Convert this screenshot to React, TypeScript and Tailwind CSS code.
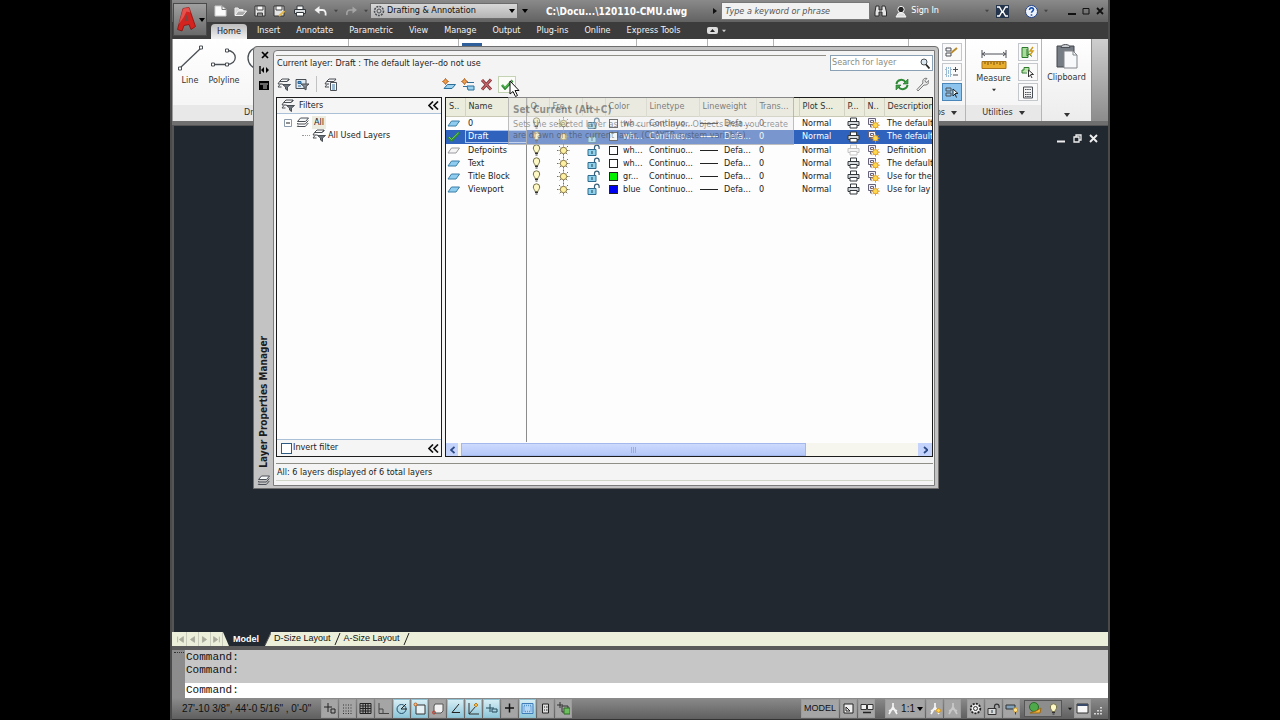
import { useState } from "react";
import type { ReactNode } from "react";

type IcoProps = {
	w?: number;
	h?: number;
	box?: string;
	className?: string;
	children: ReactNode;
};

function Ico({ w = 14, h = 14, box, className = "", children }: IcoProps) {
	return (
		<svg
			width={w}
			height={h}
			viewBox={box ?? `0 0 ${w} ${h}`}
			fill="none"
			stroke="#4a4f55"
			aria-hidden="true"
			className={`shrink-0 ${className}`}
		>
			{children}
		</svg>
	);
}

/* ---------- shared glyphs ---------- */

const Caret = ({ className = "text-black" }: { className?: string }) => (
	<Ico w={6} h={4} className={className}>
		<path d="M0 0h6L3 4z" fill="currentColor" stroke="none" />
	</Ico>
);

const Sheets = () => (
	<Ico w={13} h={11}>
		<path d="M4.500 1h8l-3 3.500h-8z" fill="#f6f8fa" />
		<path d="M2 6l-.7 1h8l3-3.500M2 8.500l-.7 1h8l3-3.500" />
	</Ico>
);

const SheetsFunnel = () => (
	<Ico w={14} h={13}>
		<path d="M5 1h7l-2 2.500H2.500zM3 6H1l1.500-2.500M5.500 6H3M4.500 9H1l2-2.500M10.500 3.500L12.500 1" />
		<path d="M5.500 6.500h8L10.500 9v3.500L8.500 11V9z" fill="#6b737b" />
	</Ico>
);

const PanelFunnel = () => (
	<Ico w={14} h={13}>
		<path d="M1 1.500h10v9H1z" fill="#dfe9f2" />
		<path d="M3 3.500h3v2H3zM3 8h3" stroke="#2b6596" fill="#58a0d0" />
		<path d="M6 6h8l-3 2.500V12L9 10.500v-2z" fill="#8a929a" />
	</Ico>
);

const SheetsList = () => (
	<Ico w={14} h={13}>
		<path d="M5 1h7l-2 2.500H2.500zM5 6H1l1.500-2.500M5 9H1l2-2.500" />
		<path d="M6.500 4.500h6v8h-6z" fill="#f8f8f8" />
		<path d="M8 7h3M8 9h3M8 11h3" stroke="#3778a8" />
	</Ico>
);

const Layer = ({ off }: { off?: boolean }) => (
	<Ico w={13} h={7}>
		<path d="M4.500 1h8l-3.500 5h-8z" fill={off ? "#f4f4f4" : "#8fcdf0"} stroke={off ? "#9a9aa0" : "#3c7ea6"} />
	</Ico>
);

const Check = ({ w = 13 }: { w?: number }) => (
	<Ico w={w} h={11} box="0 0 13 11">
		<path d="M1.500 6l3 3.500L12 1.500" stroke="#2f8a35" strokeWidth="2.600" />
		<path d="M2 6l2.500 2.500L11.500 1.800" stroke="#6fd25f" strokeWidth="1" />
	</Ico>
);

const Bulb = () => (
	<Ico w={9} h={12}>
		<path d="M3 8.500C3 7 1.300 6 1.300 4a3.200 3.200 0 016.400 0c0 2-1.700 3-1.700 4.500z" fill="#fdf8c4" stroke="#74714c" />
		<path d="M3 9.500h3M3.500 11h2" stroke="#333" />
	</Ico>
);

const Sun = () => (
	<Ico w={13} h={13}>
		<path d="M6.500 0v13M0 6.500h13M2 2l9 9M11 2l-9 9" stroke="#75705a" strokeDasharray="1.500 1" />
		<circle cx="6.500" cy="6.500" r="3.200" fill="#fdf0a0" stroke="#8a7a4a" />
	</Ico>
);

const Unlock = ({ gray }: { gray?: boolean }) => (
	<Ico w={13} h={12}>
		<path d="M7.500 6V3.500a2.300 2.300 0 014.600 0V5" stroke={gray ? "#333" : "#38607a"} strokeWidth="1.200" />
		<path d="M1 5.500h8v6H1z" fill={gray ? "#d8d8d8" : "#8fd2ee"} stroke={gray ? "#333" : "#2f6a8c"} />
		<path d="M5 7v3" stroke="#22404f" />
	</Ico>
);

const Printer = ({ off, w = 13 }: { off?: boolean; w?: number }) => (
	<Ico w={w} h={12} box="0 0 13 12">
		<g stroke={off ? "#c4c4c4" : "#33383d"}>
			<path d="M3.500 4.500V1h6v3.500" fill="#fff" />
			<path d="M1 4.500h11v4H1z" fill={off ? "#f4f4f4" : "#d7dadd"} />
			<path d="M3 7.500h7v3.500H3z" fill="#fff" />
		</g>
	</Ico>
);

const FreezeNew = () => (
	<Ico w={13} h={13}>
		<path d="M1.500 1.500h7v6h-7z" stroke="#66627a" fill="#f2f2f8" />
		<path d="M3.500 3.500h3v2h-3zM3.500 7.500v2.500H5" stroke="#66627a" />
		<path d="M8.500 3.800v8.800M4.200 8.200h8.600M5.500 5.200l6 6M11.500 5.200l-6 6" stroke="#e0962a" />
		<circle cx="8.500" cy="8.200" r="2.600" fill="#ffd84e" stroke="#d8941a" strokeWidth=".8" />
	</Ico>
);

const SunSpark = () => (
	<>
		<circle cx="3.500" cy="3.500" r="2" fill="#f0a04a" stroke="#b8682a" />
		<path d="M3.500 0v1M3.500 6v1M0 3.500h1M6 3.500h1" stroke="#c87a3a" />
	</>
);

const Chevrons = () => (
	<Ico w={11} h={9}>
		<path d="M5 .5l-4 4 4 4M10 .5l-4 4 4 4" stroke="#111" strokeWidth="1.700" />
	</Ico>
);

/* ---------- title bar ---------- */

const quickTools: { label: string; icon: ReactNode }[] = [
	{ label: "New", icon: <Ico w={13} h={12}><path d="M1 1h7l4 3.500V11H1z" fill="#fafafa" stroke="#ccc" /><path d="M8 1v3.500h4" stroke="#777" /></Ico> },
	{ label: "Open", icon: <Ico w={13} h={12}><path d="M1 10V3h3l1 1.500h4V6" fill="#d8d8d8" stroke="#eee" /><path d="M1 10.500L4 6h8.500l-3.500 4.500z" fill="#aaa" stroke="#f4f4f4" /></Ico> },
	{ label: "Save", icon: <Ico w={12} h={12}><path d="M1 1h10v10H1z" fill="#e4e4e4" stroke="#333" /><path d="M3 1h6v4H3z" fill="#fff" stroke="#444" /><path d="M3.500 11V8h5v3" fill="#888" stroke="#444" /></Ico> },
	{ label: "Save As", icon: <Ico w={13} h={12}><path d="M1 1h10v10H1z" fill="#e4e4e4" stroke="#333" /><path d="M3 1h6v4H3z" fill="#fff" stroke="#444" /><path d="M6 11l5.500-5" stroke="#e3b84a" strokeWidth="2" /></Ico> },
	{ label: "Plot", icon: <Printer w={14} /> },
	{ label: "Undo", icon: <Ico w={13} h={12}><path d="M2 5h6.500c3 0 3.500 3 3 5.500" stroke="#f2f2f2" strokeWidth="1.800" /><path d="M5.500 1v8L.5 5z" fill="#f2f2f2" stroke="none" /></Ico> },
];

function TitleBar() {
	return (
		<header className="flex h-[22px] items-center bg-linear-to-b from-[#8a8a8a] to-[#626262] pl-[42px] text-[9px] text-white">
			<div className="flex items-center gap-[7px]">
				{quickTools.map((t) => (
					<button key={t.label} type="button" aria-label={t.label} className="flex">
						{t.icon}
					</button>
				))}
				<Caret className="w-1 text-[#444]" />
				<button type="button" aria-label="Redo" className="flex">
					<Ico w={12} h={12}>
						<path d="M10 5H5C2 5 1.500 8 2 10" stroke="#a5a5a5" strokeWidth="1.600" />
						<path d="M7.500 1.500v7L12 5z" fill="#a5a5a5" stroke="none" />
					</Ico>
				</button>
				<Caret className="w-1 text-[#444]" />
			</div>
			<button
				type="button"
				className="ml-[2px] flex h-4 w-[148px] items-center gap-[2px] border border-[#6c6c6c] bg-linear-to-b from-[#d8d8d8] to-[#b4b4b4] px-[2px] text-[#111]"
			>
				<Ico w={12} h={12}>
					<circle cx="6" cy="6" r="4.500" strokeDasharray="2 1" strokeWidth="1.600" />
					<circle cx="6" cy="6" r="2" />
				</Ico>
				<span className="flex-1 text-left">Drafting &amp; Annotation</span>
				<Caret />
			</button>
			<span className="ml-1 flex">
				<Caret />
			</span>
			<h1 className="ml-[18px] text-[10px] font-bold whitespace-nowrap">C:\Docu...\120110-CMU.dwg</h1>
			<Ico w={4} h={6} className="mr-1 ml-auto">
				<path d="M0 0l4 3-4 3z" fill="#111" stroke="none" />
			</Ico>
			<input
				aria-label="Search help"
				placeholder="Type a keyword or phrase"
				className="h-[18px] w-[149px] border border-[#777] bg-[#f1f1f1] px-[3px] italic placeholder:text-[#555]"
			/>
			<button type="button" aria-label="Search" className="ml-1 flex">
				<Ico w={13} h={12}>
					<path d="M2 1h3v4h3V1h3l1.500 6v4H8V7H5v4H1V7z" fill="#e4e4e4" stroke="#2c2c2c" />
				</Ico>
			</button>
			<button type="button" className="ml-2 flex items-center gap-1">
				<Ico w={12} h={13}>
					<circle cx="6" cy="4.500" r="3.200" fill="#222" stroke="#f4f4f4" />
					<path d="M1 12h10L8.500 8h-5z" fill="#ddd" stroke="#f4f4f4" />
				</Ico>
				Sign In
			</button>
			<span className="ml-[46px] flex">
				<Caret className="w-1 text-[#444]" />
			</span>
			<button type="button" aria-label="Exchange" className="ml-[7px] flex">
				<Ico w={13} h={13}>
					<path d="M0 0h13v13H0z" fill="#24344c" stroke="none" />
					<path d="M1 2h2.500L6 6.500 3.500 11H1M12 2H9.500L7 6.500 9.500 11H12" stroke="#fff" strokeWidth="1.400" />
				</Ico>
			</button>
			<button type="button" aria-label="Help" className="ml-4 flex">
				<Ico w={13} h={13}>
					<circle cx="6.500" cy="6.500" r="6" fill="#eef3fb" stroke="#23438a" />
					<path d="M4.500 5c0-3 4-2.500 4-.4 0 1.400-2 1.500-2 3.200M6.500 9.200v1.500" stroke="#1c4fa8" strokeWidth="1.600" />
				</Ico>
			</button>
			<span className="ml-1.5 flex">
				<Caret className="w-1 text-[#444]" />
			</span>
			<div className="mr-1 ml-5 flex items-center gap-[6px]">
				<button type="button" aria-label="Minimize" className="flex">
					<Ico w={8} h={8}><path d="M0 7h8" stroke="#111" strokeWidth="2" /></Ico>
				</button>
				<button type="button" aria-label="Maximize" className="flex">
					<Ico w={8} h={8}><path d="M1 1.500h6v5.500H1z" stroke="#111" /></Ico>
				</button>
				<button type="button" aria-label="Close" className="flex">
					<Ico w={8} h={8}><path d="M1 1l6 6M7 1L1 7" stroke="#111" strokeWidth="1.800" /></Ico>
				</button>
			</div>
		</header>
	);
}

function AppMenuButton() {
	return (
		<button
			type="button"
			aria-label="Application menu"
			className="absolute top-[3px] left-px flex h-[33px] w-[34px] items-center border border-[#4a4a4a] bg-linear-to-b from-[#a0a0a0] to-[#6a6a6a]"
		>
			<Ico w={23} h={28} className="ml-[2px]">
				<path d="M7 2.500l6-1 6.500 19-4.500 3-2-5-5 1-2 5.500-4.500-1.500z" fill="#d5231f" stroke="#8b100d" strokeWidth=".8" />
				<path d="M10.500 8.500l2 6-4 1z" fill="#7b4543" stroke="none" />
				<path d="M7 2.500l6-1 1.500 5-4-1-3 6-5 7z" fill="#f2706a" stroke="none" opacity=".6" />
			</Ico>
			<Caret />
		</button>
	);
}

/* ---------- ribbon ---------- */

const ribbonTabs = [
	"Home",
	"Insert",
	"Annotate",
	"Parametric",
	"View",
	"Manage",
	"Output",
	"Plug-ins",
	"Online",
	"Express Tools",
];

function RibbonTabs() {
	const [active, setActive] = useState("Home");
	return (
		<nav className="flex h-[17px] items-stretch bg-[#3c3c3c] pl-[39px] text-[9px] text-[#f2f2f2]">
			{ribbonTabs.map((t) => (
				<button
					key={t}
					type="button"
					onClick={() => setActive(t)}
					className={`mr-1 px-[6px] ${t === active ? "mt-[2px] rounded-t-sm bg-linear-to-b from-[#bdbdbd] to-[#f2f2f2] text-[#222]" : ""}`}
				>
					{t}
				</button>
			))}
			<button type="button" aria-label="Minimize ribbon" className="ml-4 flex items-center gap-1">
				<Ico w={11} h={7}>
					<rect x="0" y="0" width="11" height="7" rx="2" fill="#ddd" stroke="none" />
					<path d="M3 5l2.500-3L8 5z" fill="#222" stroke="none" />
				</Ico>
				<Caret className="w-1 text-[#ccc]" />
			</button>
		</nav>
	);
}

function RibbonPanel({ title, width, align = "justify-center", children }: { title?: string; width: string; align?: string; children?: ReactNode }) {
	return (
		<section className={`flex flex-col border-r border-[#b5b5b5] bg-linear-to-b from-white to-[#f3f3f4] ${width}`}>
			<div className="flex flex-1 items-start px-[3px] pt-1">{children}</div>
			<div className={`flex h-4 items-center gap-1.5 bg-[#e8e8e9] px-2 text-[#333] ${align}`}>
				{title}
				{title && <Caret className="text-[#333]" />}
			</div>
		</section>
	);
}

const ToolBtn = ({ label, on, children }: { label: string; on?: boolean; children: ReactNode }) => (
	<button
		type="button"
		aria-label={label}
		className={`flex h-[18px] w-5 items-center justify-center border ${on ? "border-[#4a86b8] bg-[#8cc4ee]" : "border-[#c4c8cc] bg-[#fafafa]"}`}
	>
		{children}
	</button>
);

function Ribbon() {
	return (
		<div className="flex h-[82px] items-stretch bg-[#9b9b9d] pl-px text-[9px]">
			<RibbonPanel title="Draw" width="w-[176px]">
				<button type="button" className="flex w-7 flex-col items-center gap-[2px] text-[#333]">
					<Ico w={26} h={29}>
						<path d="M3 25L24 5" strokeWidth="1.300" />
						<path d="M1.500 24h3v3h-3zM22.500 3h3v3h-3z" fill="#fff" />
					</Ico>
					Line
				</button>
				<button type="button" className="ml-0.5 flex w-9 flex-col items-center gap-[2px] text-[#333]">
					<Ico w={26} h={29}>
						<path d="M2 21.500h14c11 0 11-14 0-14" strokeWidth="1.300" />
						<path d="M.5 20h3v3h-3zM14.500 20h3v3h-3zM14.500 6h3v3h-3z" fill="#fff" />
					</Ico>
					Polyline
				</button>
				<Ico w={26} h={29} className="ml-1">
					<circle cx="13" cy="15" r="11" strokeWidth="1.300" />
				</Ico>
			</RibbonPanel>
			<RibbonPanel width="w-[110px]" />
			<RibbonPanel width="w-[178px]">
				<span className="h-5 w-5 bg-[#2f5f9a]" />
			</RibbonPanel>
			<RibbonPanel width="w-[71px]" />
			<RibbonPanel width="w-[66px]" />
			<RibbonPanel width="flex-1" />
			<RibbonPanel title="Groups" width="w-[57px]" align="justify-end">
				<div className="ml-auto flex flex-col gap-[2px]">
					<ToolBtn label="Group edit">
						<Ico w={14} h={12}><path d="M1 2h5v3H1zM1 7h5v3H1z" /><path d="M6 7l6-5" stroke="#b98a2c" strokeWidth="2" /></Ico>
					</ToolBtn>
					<ToolBtn label="Ungroup">
						<Ico w={14} h={12}><path d="M1 2h5v3H1zM1 7h5v3H1z" stroke="#3d7fae" strokeDasharray="1 1" /><path d="M8 3.500h5M10.500 1v5M8 9h5" /></Ico>
					</ToolBtn>
					<ToolBtn label="Group selection" on>
						<Ico w={14} h={12}><path d="M1 2h5v3H1zM1 7h5v3H1z" /><path d="M8 3v7l2-2 1.500 3.500M8 3l5 4.500h-3" fill="#fff" stroke="#222" /></Ico>
					</ToolBtn>
				</div>
			</RibbonPanel>
			<RibbonPanel title="Utilities" width="w-[76px]">
				<button type="button" className="flex flex-1 flex-col items-center text-[#333]">
					<Ico w={26} h={30} className="mt-[3px]">
						<path d="M1 4v8M25 4v8M1 8h24M4 6L1.500 8 4 10M22 6l2.500 2-2.500 2" />
						<path d="M1 15.500h24v7H1z" fill="#e8ad2c" stroke="#a8741a" />
						<path d="M4 16v2M7 16v3M10 16v2M13 16v3M16 16v2M19 16v3M22 16v2" stroke="#7b5312" />
					</Ico>
					<span className="-mt-1">Measure</span>
					<Caret className="mt-0.5 w-1 text-[#333]" />
				</button>
				<div className="flex flex-col gap-[2px]">
					<ToolBtn label="Quick select">
						<Ico w={14} h={13}><path d="M1 1.500h6v10H1zM6 3v7l2-2 3 2.500" fill="#a9dc9a" stroke="#2d7a2c" /><path d="M12 1L9 5h3L9 9" stroke="#d09a1a" strokeWidth="1.400" /></Ico>
					</ToolBtn>
					<ToolBtn label="Select all">
						<Ico w={14} h={13}><path d="M1 7V4h2V1.500h5V5M1 7h5" fill="#b6e3a6" stroke="#2d7a2c" /><path d="M7.500 4v7l2-2 1.500 3M7.500 4l5 4.500h-3" fill="#fff" stroke="#333" /></Ico>
					</ToolBtn>
					<ToolBtn label="Quick calculator">
						<Ico w={12} h={13}><path d="M1.500 1h9v11h-9z" fill="#f4f4f4" /><path d="M3 3.500h6M3 6.500h6M3 8.500h6M3 10.500h6" strokeDasharray="1.500 .7" /></Ico>
					</ToolBtn>
				</div>
			</RibbonPanel>
			<section className="flex w-[50px] flex-col items-center border-r border-[#8d8d8d] bg-linear-to-b from-white to-[#ececed] pt-1 text-[#333]">
				<Ico w={24} h={28}>
					<path d="M2 3h17v21H2z" fill="#777d84" stroke="#42474d" />
					<path d="M6 4.500c0-4 9-4 9 0z" fill="#c9cdd1" />
					<path d="M9 8h9l4 4v13H9z" fill="#f8f9fa" stroke="#81868b" />
					<path d="M18 8v4h4" stroke="#81868b" />
				</Ico>
				Clipboard
				<Caret className="mt-auto mb-1" />
			</section>
			<div className="w-4 bg-linear-to-b from-[#cfcfcf] to-[#8c8c8c]" />
		</div>
	);
}

/* ---------- layer properties manager ---------- */

type LayerRow = {
	name: string;
	color: string;
	swatch: string;
	description: string;
	current?: boolean;
	noPlot?: boolean;
};

const layers: LayerRow[] = [
	{ name: "0", color: "wh...", swatch: "bg-white", description: "The default" },
	{ name: "Draft", color: "wh...", swatch: "bg-white", description: "The default", current: true },
	{ name: "Defpoints", color: "wh...", swatch: "bg-white", description: "Definition", noPlot: true },
	{ name: "Text", color: "wh...", swatch: "bg-white", description: "The default" },
	{ name: "Title Block", color: "gr...", swatch: "bg-[#00f000]", description: "Use for the" },
	{ name: "Viewport", color: "blue", swatch: "bg-[#0000f0]", description: "Use for lay" },
];

const columns: { label: string; width: string }[] = [
	{ label: "S..", width: "w-[19px]" },
	{ label: "Name", width: "w-[62px]" },
	{ label: "O.", width: "w-[22px]" },
	{ label: "Fre...", width: "w-[33px]" },
	{ label: "L..", width: "w-[23px]" },
	{ label: "Color", width: "w-[41px]" },
	{ label: "Linetype", width: "w-[53px]" },
	{ label: "Lineweight", width: "w-[57px]" },
	{ label: "Trans...", width: "w-[43px]" },
	{ label: "Plot S...", width: "w-[45px]" },
	{ label: "P...", width: "w-5" },
	{ label: "N..", width: "w-5" },
	{ label: "Description", width: "w-auto" },
];

function LayerTable() {
	return (
		<table className="w-full table-fixed border-collapse text-left leading-[13px] whitespace-nowrap">
			<colgroup>
				{columns.map((c) => (
					<col key={c.label} className={c.width} />
				))}
			</colgroup>
			<thead className="bg-[#ebecdc]">
				<tr className="h-[18px] border-b border-[#c8c8b4]">
					{columns.map((c) => (
						<th key={c.label} scope="col" className="overflow-hidden border-r border-[#d2d3c2] p-0 pl-[3px] font-normal text-[#333] last:border-r-0">
							{c.label}
						</th>
					))}
				</tr>
			</thead>
			<tbody>
				{layers.map((l) => (
					<tr key={l.name} className={l.current ? "h-[14px] bg-[#2f62bd] text-white" : "h-[13px]"}>
						<td className="p-0 pl-px">{l.current ? <Check /> : <Layer off={l.noPlot} />}</td>
						<td className="p-0">
							<span className={`block border pl-[2px] leading-[11px] ${l.current ? "border-[#a9c3ee]" : "border-transparent"}`}>{l.name}</span>
						</td>
						<td className="p-0 pl-[5px]"><Bulb /></td>
						<td className="p-0 pl-2"><Sun /></td>
						<td className="p-0 pl-[5px]"><Unlock /></td>
						<td className="p-0 pl-1">
							<span className="flex items-center gap-[5px]">
								<span className={`size-[9px] border border-[#222] ${l.swatch}`} />
								{l.color}
							</span>
						</td>
						<td className="p-0 pl-[3px]">Continuo...</td>
						<td className="p-0 pl-px">
							<span className="flex items-center gap-[6px]">
								<span className={`h-px w-[18px] ${l.current ? "bg-white" : "bg-[#222]"}`} />
								Defa...
							</span>
						</td>
						<td className="p-0 pl-[3px]">0</td>
						<td className="p-0 pl-[3px]">Normal</td>
						<td className="p-0 pl-[3px]"><Printer off={l.noPlot} /></td>
						<td className="p-0 pl-[3px]"><FreezeNew /></td>
						<td className="overflow-hidden p-0 pl-[3px]">{l.description}</td>
					</tr>
				))}
			</tbody>
		</table>
	);
}

function FilterPane() {
	const [invert, setInvert] = useState(false);
	return (
		<aside className="flex w-[166px] flex-col border border-[#1c1c1c] bg-[#fdfdfd]">
			<div className="flex h-4 items-center gap-1 border-b border-[#a9c0d6] bg-[#f5f5f5] pr-[2px] pl-1">
				<SheetsFunnel />
				<span className="flex-1">Filters</span>
				<button type="button" aria-label="Collapse filters"><Chevrons /></button>
			</div>
			<ul className="flex-1 pt-[2px] pl-[7px]">
				<li>
					<div className="flex h-[13px] items-center gap-1">
						<Ico w={8} h={8}>
							<path d="M.5.5h7v7h-7z" fill="#fff" stroke="#8a9aaa" />
							<path d="M2 4h4" stroke="#222" />
						</Ico>
						<Sheets />
						<span className="-ml-px bg-[#ecede0] px-[2px]">All</span>
					</div>
					<ul>
						<li className="flex h-[13px] items-center gap-[2px] pl-[18px]">
							<span className="h-px w-2 border-t border-dotted border-[#999]" />
							<SheetsFunnel />
							All Used Layers
						</li>
					</ul>
				</li>
			</ul>
			<div className="flex h-[17px] items-center border-t border-[#a9c0d6] bg-[#f5f5f5] pr-[2px] pl-1">
				<label className="flex flex-1 items-center gap-px">
					<input
						type="checkbox"
						checked={invert}
						onChange={() => setInvert(!invert)}
						className="size-[11px] appearance-none border border-[#2c5a80] bg-white checked:bg-[#2c5a80]"
					/>
					Invert filter
				</label>
				<button type="button" aria-label="Collapse"><Chevrons /></button>
			</div>
		</aside>
	);
}

function LayerManager() {
	return (
		<div
			role="dialog"
			aria-label="Layer Properties Manager"
			className="absolute top-[46px] left-[81px] flex w-[686px] rounded-t-sm border border-[#6e6e6e] bg-[#c3c3c3] text-[9px] text-[#1c1c1c]"
		>
			<div className="flex w-[19px] flex-col items-center gap-[7px] pt-1 pb-[2px]">
				<button type="button" aria-label="Close palette">
					<Ico w={8} h={8} className="ml-[2px]"><path d="M1 1l6 6M7 1L1 7" stroke="#000" strokeWidth="1.700" /></Ico>
				</button>
				<button type="button" aria-label="Auto-hide">
					<Ico w={10} h={8}><path d="M1 0v8" stroke="#000" strokeWidth="1.400" /><path d="M2 4l3-3v6zM10 4L7 1v6z" fill="#000" stroke="none" /></Ico>
				</button>
				<button type="button" aria-label="Properties">
					<Ico w={10} h={9}><path d="M0 0h10v9H0z" fill="#000" stroke="none" /><path d="M1 3h8M4 5h4M4 7h4" stroke="#ccc" /></Ico>
				</button>
				<h2 className="mt-auto rotate-180 text-[10px] font-bold whitespace-nowrap [writing-mode:vertical-rl]">
					Layer Properties Manager
				</h2>
				<Sheets />
			</div>
			<div className="mt-[3px] mr-[3px] mb-[2px] flex flex-1 flex-col rounded-tl-sm border border-[#7b7b7b] bg-[#f3f4f3] pr-px pl-[2px]">
				<div className="flex items-start gap-1 pt-1">
					<div className="flex h-4 flex-1 items-center border-t border-[#8f8f88] pl-px leading-[13px]">
						Current layer: Draft : The default layer--do not use
					</div>
					<label className="flex h-4 w-[103px] items-center border border-[#8aa0b4] bg-white pr-[2px] pl-px">
						<input aria-label="Search for layer" placeholder="Search for layer" className="min-w-0 flex-1 placeholder:text-[#8c8c80]" />
						<Ico w={10} h={11}>
							<circle cx="4" cy="4" r="3" fill="#dce8f0" />
							<path d="M6 6.500l3.500 4" stroke="#222" strokeWidth="1.800" />
						</Ico>
					</label>
				</div>
				<div className="flex h-[26px] items-center">
					<div className="flex w-[172px] items-center gap-1 pl-px">
						<button type="button" aria-label="New property filter"><SheetsFunnel /></button>
						<button type="button" aria-label="New group filter"><PanelFunnel /></button>
						<span className="mx-[3px] h-4 w-px bg-[#c2c2c2]" />
						<button type="button" aria-label="Layer states manager"><SheetsList /></button>
					</div>
					<div className="-ml-[6px] flex flex-1 items-center gap-[5px]">
						<button type="button" aria-label="New layer">
							<Ico w={14} h={13}><path d="M5.500 6.500h8l-3.500 4H2z" fill="#9ad2f0" stroke="#2c6e96" /><SunSpark /></Ico>
						</button>
						<button type="button" aria-label="New layer VP frozen">
							<Ico w={14} h={13}><path d="M6 4.500h7M6 8h7v4H7zM2 8.500h4" fill="#9ad2f0" stroke="#2c6e96" /><SunSpark /></Ico>
						</button>
						<button type="button" aria-label="Delete layer">
							<Ico w={13} h={13}><path d="M2 2l9 9.500M11 1.500L2 11.500" stroke="#7a3438" strokeWidth="3" /><path d="M2 2l9 9.500M11 1.500L2 11.500" stroke="#c8646a" strokeWidth="1.300" /></Ico>
						</button>
						<button type="button" aria-label="Set current" className="flex h-[17px] w-[18px] items-center justify-center border border-[#c3d3b4] bg-[#fbfcf8]">
							<Check w={14} />
						</button>
					</div>
					<div className="flex items-center gap-[6px] pr-[4px]">
						<button type="button" aria-label="Refresh">
							<Ico w={14} h={13}>
								<path d="M1.500 6C2 1.500 8 .5 10.500 4M12.500 7c-.5 4.500-6.500 5.500-9 2" stroke="#2f8a35" strokeWidth="2" />
								<path d="M13 1v5H8zM1 12V7h5z" fill="#3fa045" stroke="#1f6d27" strokeWidth=".6" />
							</Ico>
						</button>
						<button type="button" aria-label="Settings">
							<Ico w={14} h={14}>
								<path d="M2 12.500l6-6.500C7 3 9 .5 12 1.500L10 3.500l.5 1.500 1.500.5 1.500-2c1 3-1.500 5-4.500 4.500l-6 6z" fill="#ececec" stroke="#777" />
							</Ico>
						</button>
					</div>
				</div>
				<div className="flex h-[360px] gap-[3px]">
					<FilterPane />
					<div className="relative flex min-w-0 flex-1 flex-col overflow-hidden border border-[#1c1c1c] bg-[#fdfdfd]">
						<LayerTable />
						<span className="absolute top-0 bottom-[14px] left-[80px] w-px bg-[#8c8c8c]" />
						<div className="mt-auto flex h-[13px] items-stretch bg-[#f6f6ee]">
							<button type="button" aria-label="Scroll left" className="flex w-3 items-center justify-center bg-[#c3d3fb]">
								<Ico w={5} h={8}><path d="M4.500 1L1 4l3.500 3" stroke="#2c4a86" strokeWidth="1.800" /></Ico>
							</button>
							<span className="ml-[3px] flex w-[345px] items-center justify-center gap-px border border-[#a4b8ee] bg-linear-to-b from-[#cddafe] to-[#b5c8f8]">
								<i className="h-1.5 w-px bg-[#98aee6]" />
								<i className="h-1.5 w-px bg-[#98aee6]" />
								<i className="h-1.5 w-px bg-[#98aee6]" />
							</span>
							<button type="button" aria-label="Scroll right" className="ml-auto flex w-[14px] items-center justify-center bg-[#c3d3fb]">
								<Ico w={5} h={8}><path d="M1 1l3.500 3L1 7" stroke="#2c4a86" strokeWidth="1.800" /></Ico>
							</button>
						</div>
					</div>
				</div>
				<p className="mt-[6px] h-[17px] border-t border-[#8f8f88] pl-px leading-4">All: 6 layers displayed of 6 total layers</p>
				<div className="mb-1 border-t border-[#cfd6c8]" />
			</div>
			{/* fading tooltip of the Set Current button */}
			<div
				role="tooltip"
				className="absolute top-[50px] left-[254px] w-[286px] border border-[#999]/60 bg-[#e9e9e9]/40 px-[4px] pt-[5px] pb-[3px] whitespace-nowrap text-[#333]/50"
			>
				<b className="block text-[10px] leading-[14px]">Set Current (Alt+C)</b>
				<span className="block pt-0.5 leading-[11px]">Sets the selected layer as the current layer. Objects that you create</span>
				<span className="block leading-[11px]">are drawn on the current layer. (CLAYER system variable)</span>
			</div>
			<Ico w={12} h={18} className="absolute top-[33px] left-[255px]">
				<path d="M1 1v13l3-2.500 2.500 5 2-1-2.500-5h4z" fill="#fff" stroke="#111" />
			</Ico>
		</div>
	);
}

/* ---------- drawing area and bottom bars ---------- */

function DrawingArea() {
	return (
		<main className="flex min-h-[300px] flex-1 items-start justify-end border-t border-l-2 border-[#555] bg-[#212830] pt-2 pr-[10px]">
			<div className="flex gap-[7px]">
				<button type="button" aria-label="Minimize drawing">
					<Ico w={9} h={9}><path d="M0 7.500h8" stroke="#eee" strokeWidth="2" /></Ico>
				</button>
				<button type="button" aria-label="Restore drawing">
					<Ico w={9} h={9}><path d="M3 2.500V1h5v5H6.500M1 3h5v5H1z" stroke="#eee" strokeWidth="1.300" /></Ico>
				</button>
				<button type="button" aria-label="Close drawing">
					<Ico w={9} h={9}><path d="M1 1l7 7M8 1L1 8" stroke="#eee" strokeWidth="1.900" /></Ico>
				</button>
			</div>
		</main>
	);
}

const Slash = () => (
	<Ico w={7} h={14}>
		<path d="M1 13L6 1" stroke="#222" />
	</Ico>
);

const navArrows = [
	{ label: "First layout", d: "M2 2v7M9 2L4 5.500 9 9z" },
	{ label: "Previous layout", d: "M8 2L3 5.500 8 9z" },
	{ label: "Next layout", d: "M3 2l5 3.500L3 9z" },
	{ label: "Last layout", d: "M9 2v7M2 2l5 3.500L2 9z" },
];

function LayoutTabs() {
	return (
		<nav className="flex h-[14px] items-center bg-[#ecf0da] pl-[3px] font-['Liberation_Sans',Arial,sans-serif] text-[9px] text-[#111]">
			{navArrows.map((a) => (
				<button key={a.label} type="button" aria-label={a.label} className="flex h-full w-3 items-center justify-center border-r border-[#c9ccba]">
					<Ico w={9} h={9} box="0 0 11 11"><path d={a.d} fill="#a9aa9c" stroke="#a9aa9c" /></Ico>
				</button>
			))}
			<Ico w={6} h={14}><path d="M0 0h6v14z" fill="#212830" stroke="none" /></Ico>
			<button type="button" className="h-full bg-[#212830] px-1 leading-[14px] font-bold text-white">Model</button>
			<Ico w={8} h={14}><path d="M0 0h8L2 14H0z" fill="#212830" stroke="none" /><path d="M2 13L8 1" stroke="#555" /></Ico>
			<button type="button" className="px-[3px]">D-Size Layout</button>
			<Slash />
			<button type="button" className="px-[3px]">A-Size Layout</button>
			<Slash />
		</nav>
	);
}

function CommandLine() {
	return (
		<section className="flex border-t-4 border-[#5a5a5a] bg-[#8c8c8c] font-['Liberation_Mono','Courier_New',monospace] text-[11px] text-[#111]">
			<div className="w-[13px] pt-[2px] pl-[2px]">
				<div className="h-[2px] w-[10px] border-t border-dotted border-[#333]" />
			</div>
			<div className="flex-1">
				<div className="h-[33px] bg-[#c6c6c6] pt-px pl-px leading-[13px]">
					<p>Command:</p>
					<p>Command:</p>
				</div>
				<label className="flex h-[15px] items-center bg-white pl-px">
					Command:
					<input aria-label="Command" className="ml-1 min-w-0 flex-1" />
				</label>
			</div>
		</section>
	);
}

const drafting: { label: string; on?: boolean; icon: ReactNode }[] = [
	{ label: "Infer constraints", icon: <path d="M5 1v9M1 5h8M8 7h4v4H8z" stroke="#222" /> },
	{ label: "Snap", icon: <path d="M2 3h9M2 6h9M2 9h9M2 11.500h9" stroke="#333" strokeDasharray="1 1.500" /> },
	{ label: "Grid", icon: <path d="M1 1.500h11v10H1zM1 4h11M1 6.500h11M1 9h11M4 1v10M6.500 1v10M9 1v10" stroke="#222" /> },
	{ label: "Ortho", icon: <path d="M2 1v10.500h10M2 7h4v4" stroke="#444" /> },
	{ label: "Polar", on: true, icon: <><circle cx="6.500" cy="7" r="4.500" stroke="#24506a" /><path d="M6 7h6M6 7l5-5" stroke="#222" /></> },
	{ label: "Object snap", on: true, icon: <><path d="M3 3h9v9H3z" fill="#e6f1f6" stroke="#333" /><circle cx="2.500" cy="2.500" r="1.500" fill="#f8c08a" stroke="#b5652a" /></> },
	{ label: "3D object snap", icon: <><path d="M4 2h8v7l-2 2H3V4z" fill="#f2f2f2" stroke="#555" /><circle cx="3" cy="10.500" r="1.500" stroke="#c03a2a" /></> },
	{ label: "Object snap tracking", on: true, icon: <path d="M10 2L3 10.500h8" stroke="#222" /> },
	{ label: "Dynamic UCS", on: true, icon: <><path d="M2 1v11h10M2 12L9 4" stroke="#333" /><path d="M9 1l2 2-2 2-2-2z" fill="#f3b84a" stroke="#b5802a" /></> },
	{ label: "Dynamic input", on: true, icon: <path d="M5 2v8M1 6h8M7 7h5v3H7z" stroke="#244a5a" /> },
	{ label: "Lineweight", icon: <path d="M6.500 1.500v9M2 6h9" stroke="#111" strokeWidth="1.500" /> },
	{ label: "Transparency", on: true, icon: <><path d="M1 1.500h11v10H1z" fill="#b4d7f5" stroke="#3f7db8" /><path d="M3 3.500h7v6H3z" stroke="#5a98d0" strokeWidth="1.500" strokeDasharray="1 1" /></> },
	{ label: "Quick properties", icon: <path d="M3.500 2h6v9h-6zM5 5h1M7 5h1.500M5 8h1M7 8h1.500" fill="#ddd" stroke="#222" /> },
	{ label: "Selection cycling", icon: <><path d="M3 0v6M0 3h6M5 4h6v6H5z" stroke="#333" /><path d="M7 6h6v6H7z" fill="#6cbf5c" stroke="#2d6a26" /></> },
];

const StatusBtn = ({ label, on, children }: { label: string; on?: boolean; children: ReactNode }) => (
	<button
		type="button"
		aria-label={label}
		className={`flex h-[19px] w-[17px] items-center justify-center border ${on ? "border-[#8ec0d2] bg-linear-to-b from-[#d6edf4] to-[#8fc7da]" : "border-[#9c9c9c] bg-[#a5a5a5]"}`}
	>
		{children}
	</button>
);

const AnnoScale = ({ color, spark }: { color: string; spark?: boolean }) => (
	<Ico w={12} h={13}>
		<path d="M6 1v4M6 5L2 12M6 5l4 7M2 9l4-2 4 2" stroke={color} strokeWidth="1.700" />
		{spark && <circle cx="9.500" cy="8.500" r="2" fill="#ffd24a" stroke="#d0962a" />}
	</Ico>
);

function StatusBar() {
	return (
		<footer className="flex h-[22px] items-center border-b border-[#333] bg-linear-to-b from-[#8b8b8b] to-[#5f5f5f] pr-1 font-['Liberation_Sans',Arial,sans-serif] text-[9px] text-[#111]">
			<span className="w-[149px] pl-[10px] text-[10px] whitespace-nowrap">27'-10 3/8", 44'-0 5/16" , 0'-0"</span>
			<div className="flex gap-px">
				{drafting.map((d) => (
					<StatusBtn key={d.label} label={d.label} on={d.on}>
						<Ico w={13} h={13}>{d.icon}</Ico>
					</StatusBtn>
				))}
			</div>
			<div className="ml-auto flex items-center gap-px">
				<button type="button" className="h-[19px] border border-[#9c9c9c] bg-[#a5a5a5] px-[2px]">MODEL</button>
				<StatusBtn label="Layout">
					<Ico w={12} h={12}><path d="M1 1h9v9H1z" fill="#f0f0f0" stroke="#222" /><path d="M3 4v4h4z" stroke="#222" /></Ico>
				</StatusBtn>
				<StatusBtn label="Quick view">
					<Ico w={14} h={12}><path d="M1 1.500h5.500v5H1zM7.500 1.500H13v5H7.500z" fill="#f0f0f0" stroke="#333" /><path d="M3 9.500h8" stroke="#222" strokeWidth="1.500" /></Ico>
				</StatusBtn>
			</div>
			<div className="ml-[10px] flex items-center gap-px">
				<button type="button" className="flex h-[19px] items-center gap-[2px] border border-[#9c9c9c] bg-[#a5a5a5] px-px text-[10px]">
					<AnnoScale color="#f4f4f4" />
					1:1
					<Caret />
				</button>
				<StatusBtn label="Annotation visibility"><AnnoScale color="#f4f4f4" spark /></StatusBtn>
				<StatusBtn label="Auto scale"><AnnoScale color="#c9c9c9" /></StatusBtn>
			</div>
			<div className="ml-[6px] flex items-center gap-px">
				<StatusBtn label="Workspace">
					<Ico w={13} h={13}>
						<circle cx="6.500" cy="6.500" r="4.800" fill="#eee" stroke="#222" strokeWidth="1.800" strokeDasharray="2 1.200" />
						<circle cx="6.500" cy="6.500" r="2" stroke="#333" />
					</Ico>
				</StatusBtn>
				<StatusBtn label="Lock toolbars"><Unlock gray /></StatusBtn>
				<StatusBtn label="Hardware">
					<Ico w={14} h={12}><path d="M1 2h9v4H1z" fill="#7f9fba" stroke="#333" /><circle cx="10.500" cy="7" r="2.200" fill="#ffe08a" stroke="#c8962a" /><path d="M10.500 9v2.500" stroke="#444" /></Ico>
				</StatusBtn>
			</div>
			<div className="mx-1 flex h-[17px] w-[38px] items-center justify-around border border-[#555] bg-[#8d8d8d]">
				<Ico w={15} h={13}><circle cx="6" cy="5" r="4.500" fill="#4fa84a" stroke="#2a6a2a" /><path d="M2 11l6-2 5-3-1 5z" fill="#f0b53a" stroke="#9a6a1a" /></Ico>
				<Bulb />
			</div>
			<span className="flex w-2 justify-center"><Caret className="w-1" /></span>
			<StatusBtn label="Clean screen">
				<Ico w={13} h={11}><path d="M1 1h11v9H1z" fill="#f8f8f8" stroke="#333" /><path d="M1 2h11" stroke="#3a4a6a" strokeWidth="2" /></Ico>
			</StatusBtn>
			<Ico w={11} h={12} className="ml-[2px]">
				<path d="M8 4v1.500M5 7v1.500M8 7v1.500M2 10v1.500M5 10v1.500M8 10v1.500" stroke="#eee" strokeWidth="1.600" />
			</Ico>
		</footer>
	);
}

export default function App() {
	return (
		<div className="min-h-screen bg-black px-[170px] font-['DejaVu_Sans_Condensed','DejaVu_Sans',sans-serif]">
			<div className="relative flex min-h-screen flex-col border-x-2 border-[#4a4a4a] bg-[#6b6b6b]">
				<TitleBar />
				<RibbonTabs />
				<Ribbon />
				<div className="h-1 bg-[#6f6f6f]" />
				<DrawingArea />
				<LayoutTabs />
				<CommandLine />
				<StatusBar />
				<AppMenuButton />
				<LayerManager />
			</div>
		</div>
	);
}
